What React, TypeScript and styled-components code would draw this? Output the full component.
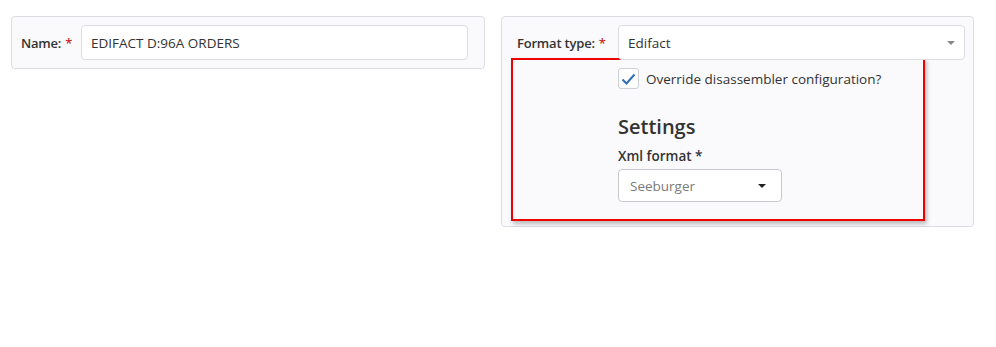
import { FC } from 'react';
import styled, { createGlobalStyle } from 'styled-components';

const GlobalStyle = createGlobalStyle`
  body {
    margin: 0;
    background: #ffffff;
    font-family: 'Open Sans', 'Noto Sans', sans-serif;
    font-size: 14px;
    color: #333333;
  }
`;

const Page = styled.div`
  display: flex;
  align-items: flex-start;
  gap: 16px;
  padding: 16px 21px 0 11px;
  width: 996px;
  height: 347px;
  box-sizing: border-box;
`;

const Card = styled.div<{ width: number; padLeft: number; padRight: number; padBottom: number }>`
  width: ${({ width }) => width}px;
  box-sizing: border-box;
  background: #fafafc;
  border: 1px solid #dcdde2;
  border-radius: 4px;
  padding: 8px ${({ padRight }) => padRight}px ${({ padBottom }) => padBottom}px
    ${({ padLeft }) => padLeft}px;
`;

const Row = styled.div<{ labelWidth: number }>`
  display: grid;
  grid-template-columns: ${({ labelWidth }) => labelWidth}px 1fr;
  align-items: center;
  padding-bottom: 4px;
`;

const Label = styled.label<{ indent?: number }>`
  padding-left: ${({ indent }) => indent || 0}px;
  font-size: 13px;
  font-weight: 600;
  letter-spacing: -0.2px;
  color: #333333;
`;

const Required = styled.span`
  color: #c9302c;
  margin-left: 4px;
`;

const Input = styled.div`
  height: 35px;
  box-sizing: border-box;
  display: flex;
  align-items: center;
  padding: 0 9px;
  background: #ffffff;
  border: 1px solid #dcdde2;
  border-radius: 4px;
  font-size: 13.5px;
  color: #333333;
  justify-content: space-between;
`;

const Caret = styled.span<{ color: string; size: number }>`
  width: 0;
  height: 0;
  border-left: ${({ size }) => size}px solid transparent;
  border-right: ${({ size }) => size}px solid transparent;
  border-top: ${({ size }) => size}px solid ${({ color }) => color};
`;

const Highlight = styled.div`
  margin: -6px 0 0 1px;
  width: 414px;
  box-sizing: border-box;
  border: 2px solid #ee0000;
  box-shadow: 2px 3px 4px rgba(0, 0, 0, 0.25);
  padding: 8px 0 17px 105px;
`;

const CheckRow = styled.div`
  display: flex;
  align-items: center;
  gap: 7px;
  font-size: 13.5px;
  color: #333333;
`;

const CheckBox = styled.span`
  width: 21px;
  height: 21px;
  box-sizing: border-box;
  border: 1px solid #cfd0d6;
  border-radius: 3px;
  background: #ffffff;
  display: flex;
  align-items: center;
  justify-content: center;
`;

const Heading = styled.h3`
  margin: 25px 0 0;
  font-size: 20px;
  font-weight: 600;
  color: #333333;
  line-height: 26px;
`;

const FieldLabel = styled.div`
  margin-top: 7px;
  font-size: 13.5px;
  font-weight: 600;
  color: #333333;
`;

const Select = styled.div`
  margin-top: 4px;
  width: 164px;
  height: 33px;
  box-sizing: border-box;
  display: flex;
  align-items: center;
  justify-content: space-between;
  padding: 0 15px 0 11px;
  background: #ffffff;
  border: 1px solid #c8c9ce;
  border-radius: 4px;
  font-size: 13.5px;
  color: #7a7a7a;
`;

const App: FC = () => (
  <>
    <GlobalStyle />
    <Page>
      <Card width={474} padLeft={9} padRight={16} padBottom={4}>
        <Row labelWidth={60}>
          <Label>
            Name:<Required>*</Required>
          </Label>
          <Input>EDIFACT D:96A ORDERS</Input>
        </Row>
      </Card>
      <Card width={473} padLeft={8} padRight={8} padBottom={5}>
        <Row labelWidth={108}>
          <Label indent={7}>
            Format type:<Required>*</Required>
          </Label>
          <Input>
            Edifact
            <Caret color="#888888" size={4} />
          </Input>
        </Row>
        <Highlight>
          <CheckRow>
            <CheckBox>
              <svg width="15" height="12" viewBox="0 0 15 12">
                <path d="M1.5 6.5 L5.5 10.5 L13.5 1.5" fill="none" stroke="#2f6eb5" strokeWidth="2" />
              </svg>
            </CheckBox>
            Override disassembler configuration?
          </CheckRow>
          <Heading>Settings</Heading>
          <FieldLabel>Xml format *</FieldLabel>
          <Select>
            Seeburger
            <Caret color="#222222" size={4} />
          </Select>
        </Highlight>
      </Card>
    </Page>
  </>
);

export default App;
